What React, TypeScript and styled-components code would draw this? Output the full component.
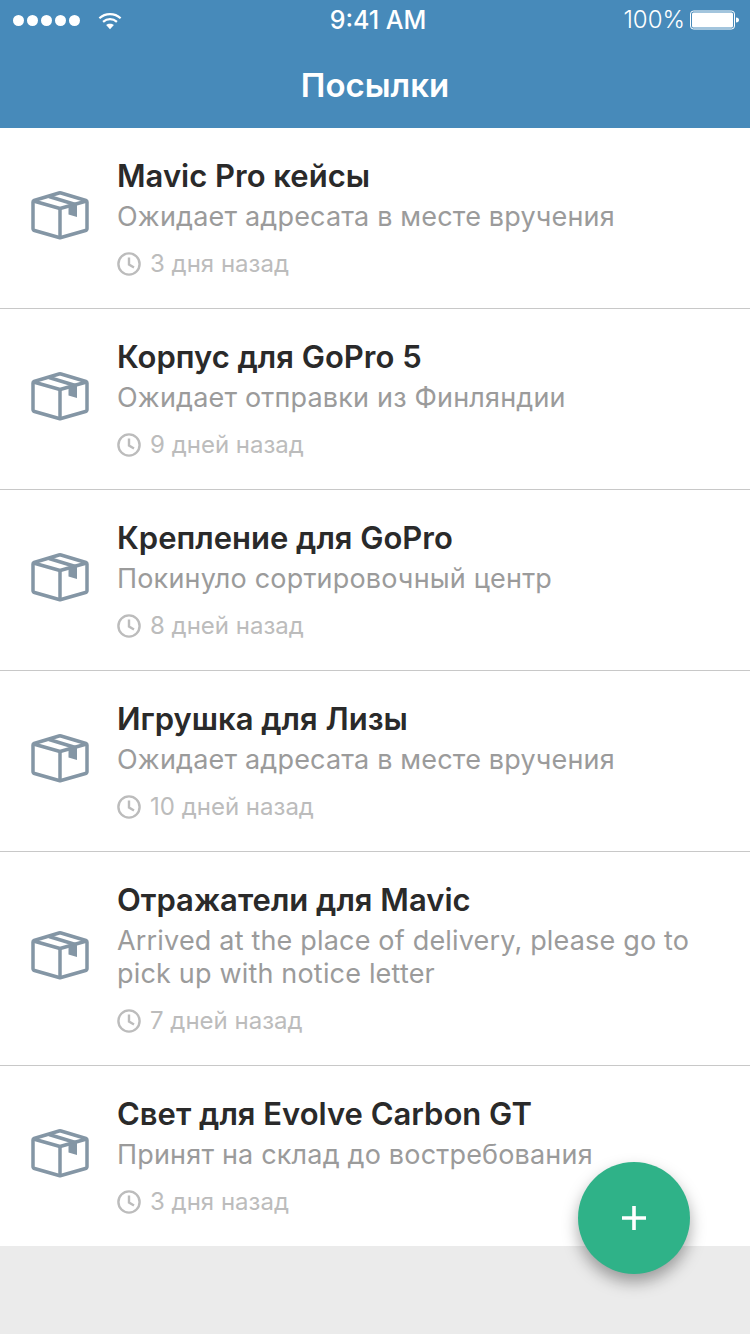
import styled, { createGlobalStyle } from 'styled-components';

const GlobalStyle = createGlobalStyle`
  html, body {
    margin: 0;
    padding: 0;
    background: #ebebeb;
  }
  body {
    font-family: Inter, "Noto Sans", sans-serif;
  }
`;

const Screen = styled.div`
  position: relative;
  width: 750px;
  height: 1334px;
  overflow: hidden;
  background: #ebebeb;
`;

const Header = styled.header`
  height: 128px;
  background: #478aba;
  color: #fff;
  box-sizing: border-box;
`;

const StatusBar = styled.div`
  height: 40px;
  display: grid;
  grid-template-columns: 1fr auto 1fr;
  align-items: center;
  padding: 0 10px 0 13px;
  line-height: 40px;
`;

const StatusLeft = styled.div`
  display: flex;
  align-items: center;
  gap: 18px;
`;

const StatusRight = styled.div`
  display: flex;
  align-items: center;
  justify-content: flex-end;
  gap: 5px;
  font-size: 24px;
  font-weight: 300;
`;

const Signal = styled.div`
  display: flex;
  gap: 3px;
`;

const Dot = styled.span`
  width: 11px;
  height: 11px;
  border-radius: 50%;
  background: #fff;
`;

const Clock = styled.div`
  padding-left: 3px;
  font-size: 25px;
  font-weight: 500;
`;

const Title = styled.h1`
  margin: 0;
  height: 88px;
  line-height: 90px;
  text-align: center;
  font-size: 33px;
  font-weight: 600;
`;

const List = styled.ul`
  list-style: none;
  margin: 0;
  padding: 0;
  background: #fff;
`;

const Row = styled.li`
  display: flex;
  align-items: center;
  box-sizing: border-box;
  padding: 30px 40px 27px 31px;
  border-bottom: 1px solid #c8c8c8;

  &:last-child {
    border-bottom: none;
  }
`;

const BoxSlot = styled.div`
  flex: none;
  width: 86px;
  padding-bottom: 10px;
  display: flex;
`;

const Info = styled.div`
  min-width: 0;
`;

const Name = styled.div`
  font-size: 31px;
  line-height: 36px;
  font-weight: 600;
  color: #2a2a2a;
`;

const Status = styled.div`
  margin-top: 6px;
  font-size: 27px;
  letter-spacing: 0.18px;
  line-height: 33px;
  color: #9b9b9b;
`;

const Time = styled.div`
  display: flex;
  align-items: center;
  gap: 9px;
  margin-top: 14px;
  font-size: 24px;
  line-height: 34px;
  color: #bcbcbc;
`;

const Fab = styled.button`
  position: absolute;
  left: 578px;
  top: 1162px;
  width: 112px;
  height: 112px;
  padding: 0;
  border: none;
  border-radius: 50%;
  background: #2fb288;
  box-shadow: 0 8px 16px rgba(0, 0, 0, 0.35);
  display: flex;
  align-items: center;
  justify-content: center;
`;

const parcels = [
  { name: 'Mavic Pro кейсы', status: 'Ожидает адресата в месте вручения', time: '3 дня назад' },
  { name: 'Корпус для GoPro 5', status: 'Ожидает отправки из Финляндии', time: '9 дней назад' },
  { name: 'Крепление для GoPro', status: 'Покинуло сортировочный центр', time: '8 дней назад' },
  { name: 'Игрушка для Лизы', status: 'Ожидает адресата в месте вручения', time: '10 дней назад' },
  {
    name: 'Отражатели для Mavic',
    status: 'Arrived at the place of delivery, please go to pick up with notice letter',
    time: '7 дней назад',
  },
  { name: 'Свет для Evolve Carbon GT', status: 'Принят на склад до востребования', time: '3 дня назад' },
];

const Wifi = () => (
  <svg width="24" height="19" viewBox="0 0 26 20" fill="none" stroke="#fff" strokeWidth="2.4">
    <path d="M1.5 7.5C8 1.5 18 1.5 24.5 7.5" />
    <path d="M5.5 11.5C10 7.5 16 7.5 20.5 11.5" />
    <path d="M13 19.5L8.8 15C11 13 15 13 17.2 15Z" fill="#fff" stroke="none" />
  </svg>
);

const Battery = () => (
  <svg width="50" height="20" viewBox="0 0 50 20">
    <rect x="0.5" y="1" width="44" height="18" rx="3" fill="none" stroke="#fff" />
    <rect x="2" y="2.5" width="41" height="15" rx="1.5" fill="#fff" />
    <path d="M46 7.5c2 0 3 1 3 2.5s-1 2.5-3 2.5z" fill="#fff" />
  </svg>
);

const BoxIcon = () => (
  <svg width="58" height="50" viewBox="0 0 58 50" fill="none" stroke="#8496a5" strokeWidth="3.5" strokeLinejoin="round">
    <path d="M3 10.5L28 3C28.8 2.8 29.2 2.8 30 3L55 10.5C55.6 10.7 56 11.2 56 12V38.5C56 39.5 55.5 40.2 54.5 40.5L30 47.5C29.2 47.7 28.8 47.7 28 47.5L3.5 40.5C2.5 40.2 2 39.5 2 38.5V12C2 11.2 2.4 10.7 3 10.5Z" />
    <path d="M2.5 11L29 18.5L55.5 11" />
    <path d="M29 18.5V47" />
    <path d="M18 6.5L46 15" />
    <path d="M37.5 16.5L46 14V27L37.5 24.5Z" fill="#8496a5" stroke="none" />
  </svg>
);

const ClockIcon = () => (
  <svg width="24" height="24" viewBox="0 0 24 24" fill="none" stroke="#bcbcbc" strokeWidth="2.4">
    <circle cx="12" cy="12" r="10.6" />
    <path d="M12 5.5V12.5L17 15.5" />
  </svg>
);

const PlusIcon = () => (
  <svg width="26" height="26" viewBox="0 0 26 26" stroke="#fff" strokeWidth="3.6">
    <path d="M13 1V25M1 13H25" />
  </svg>
);

const App = () => (
  <Screen>
    <GlobalStyle />
    <Header>
      <StatusBar>
        <StatusLeft>
          <Signal>
            {[0, 1, 2, 3, 4].map((i) => (
              <Dot key={i} />
            ))}
          </Signal>
          <Wifi />
        </StatusLeft>
        <Clock>9:41 AM</Clock>
        <StatusRight>
          100%
          <Battery />
        </StatusRight>
      </StatusBar>
      <Title>Посылки</Title>
    </Header>
    <List>
      {parcels.map((p) => (
        <Row key={p.name}>
          <BoxSlot>
            <BoxIcon />
          </BoxSlot>
          <Info>
            <Name>{p.name}</Name>
            <Status>{p.status}</Status>
            <Time>
              <ClockIcon />
              {p.time}
            </Time>
          </Info>
        </Row>
      ))}
    </List>
    <Fab aria-label="Добавить">
      <PlusIcon />
    </Fab>
  </Screen>
);

export default App;
